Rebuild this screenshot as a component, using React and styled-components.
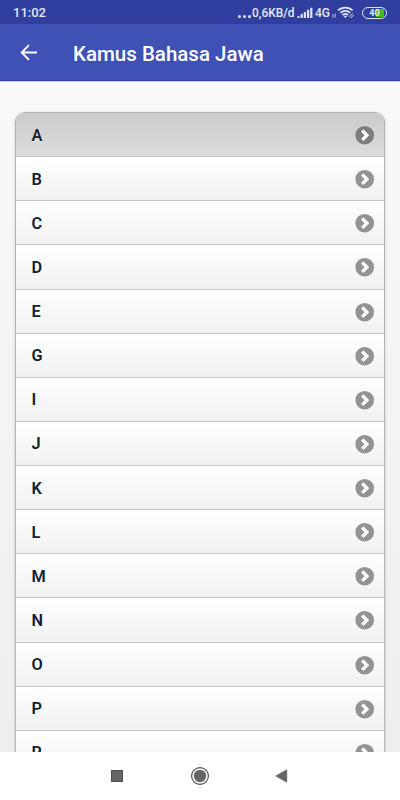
import React from 'react';
import styled, { createGlobalStyle } from 'styled-components';

const LETTERS = ['A', 'B', 'C', 'D', 'E', 'G', 'I', 'J', 'K', 'L', 'M', 'N', 'O', 'P', 'R'];

const SignalIcon = () => (
  <svg width='16' height='12' viewBox='0 0 16 12' fill='#dfe2f5'>
    <rect x='0.5' y='9' width='2' height='2' />
    <rect x='3.6' y='7' width='2.2' height='4' />
    <rect x='6.8' y='5' width='2.2' height='6' />
    <rect x='10' y='2.8' width='2.2' height='8.2' />
    <rect x='13.2' y='0.8' width='2.2' height='10.2' />
  </svg>
);

const DataIcon = () => (
  <svg width='5' height='12' viewBox='0 0 5 12' fill='#b9bfe3'>
    <rect x='0.5' y='7' width='1' height='4' />
    <rect x='2.8' y='6.5' width='1' height='4' />
  </svg>
);

const WifiIcon = () => (
  <svg width='18' height='13' viewBox='0 0 18 13' fill='none' stroke='#dfe2f5'>
    <path d='M1 4.4C5 0.6 11.6 0.6 15.6 4.4' strokeWidth='1.8' />
    <path d='M3.4 6.9C6.2 4.2 10.4 4.2 13.2 6.9' strokeWidth='1.8' />
    <path d='M5.6 9.1C7.2 7.5 9.4 7.5 11 9.1' strokeWidth='1.6' />
    <path d='M6.7 10.1L8.3 11.7L9.9 10.1Z' fill='#dfe2f5' strokeWidth='0.5' />
    <path d='M12.3 10.8L15.8 7.3M13.7 12L16.8 8.9' strokeWidth='1' />
  </svg>
);

const BackIcon = () => (
  <svg width='18' height='17' viewBox='0 0 18 17' fill='none' stroke='#fff' strokeWidth='1.9'>
    <path d='M17 8.5H2M9 1.2L1.7 8.5L9 15.8' />
  </svg>
);

const ArrowIcon = ({ active }) => (
  <svg width='20' height='20' viewBox='0 0 20 20'>
    <circle cx='9.7' cy='10.2' r='9.3' fill={active ? '#7d7d7d' : '#939393'} />
    <path d='M7.2 5.5L11.9 10.2L7.2 14.9' fill='none' stroke='#fff' strokeWidth='3.3' />
  </svg>
);

const App = () => (
  <Screen>
    <GlobalStyle />
    <StatusBar>
      <Clock>11:02</Clock>
      <StatusIcons>
        <Dots>
          <i />
          <i />
          <i />
        </Dots>
        <Speed>0,6KB/d</Speed>
        <SignalIcon />
        <Network>4G</Network>
        <DataIcon />
        <WifiIcon />
        <Battery>40</Battery>
      </StatusIcons>
    </StatusBar>
    <AppBar>
      <BackIcon />
      <Title>Kamus Bahasa Jawa</Title>
    </AppBar>
    <Content>
      <List>
        {LETTERS.map((letter, index) => (
          <Row key={letter} $active={index === 0}>
            <span>{letter}</span>
            <ArrowIcon active={index === 0} />
          </Row>
        ))}
      </List>
    </Content>
    <NavBar>
      <svg width='14' height='14' viewBox='0 0 14 14'>
        <rect x='1.5' y='1.5' width='11' height='11' fill='#666' stroke='#505050' />
      </svg>
      <svg width='20' height='20' viewBox='0 0 20 20'>
        <circle cx='10' cy='10' r='8.4' fill='none' stroke='#4a4a4a' strokeWidth='1.1' />
        <circle cx='10' cy='10' r='6.2' fill='#666' />
      </svg>
      <svg width='14' height='14' viewBox='0 0 14 14'>
        <path d='M0.7 7L11.8 0.7V13.3Z' fill='#666' stroke='#555' strokeWidth='0.5' />
      </svg>
    </NavBar>
  </Screen>
);

const GlobalStyle = createGlobalStyle`
  * {
    box-sizing: border-box;
  }
  body {
    margin: 0;
    overflow: hidden;
    font-family: Roboto, sans-serif;
  }
  svg {
    display: block;
    flex-shrink: 0;
  }
`;

const Screen = styled.div`
  display: flex;
  flex-direction: column;
  width: 400px;
  height: 800px;
  overflow: hidden;
`;

const StatusBar = styled.div`
  display: flex;
  align-items: center;
  justify-content: space-between;
  height: 24px;
  flex-shrink: 0;
  padding: 1px 13px 0;
  background: #303f9f;
  color: #e6e8f7;
`;

const Clock = styled.span`
  font-size: 13px;
  font-weight: 500;
`;

const StatusIcons = styled.div`
  display: flex;
  align-items: center;
`;

const Dots = styled.div`
  display: flex;
  gap: 2px;
  margin: 7px 1px 0 0;
  i {
    width: 3px;
    height: 3px;
    border-radius: 50%;
    background: #dfe2f5;
  }
`;

const Speed = styled.span`
  width: 45px;
  font-size: 11.9px;
  font-weight: 500;
  white-space: nowrap;
`;

const Network = styled.span`
  width: 16px;
  margin: 0 1px 0 2px;
  font-size: 12px;
  font-weight: 500;
`;

const Battery = styled.div`
  display: flex;
  align-items: center;
  justify-content: center;
  width: 25px;
  height: 12px;
  margin-left: 7px;
  border: 1px solid #dfe2f5;
  border-radius: 6px;
  background: linear-gradient(#46bd12, #46bd12) right 2px center / 8px 8px no-repeat;
  font-size: 9px;
  font-weight: 700;
  line-height: 10px;
`;

const AppBar = styled.header`
  display: flex;
  align-items: center;
  gap: 35px;
  height: 57px;
  flex-shrink: 0;
  padding: 1px 20px 0;
  background: #3f51b5;
  border-bottom: 1px solid #3041ae;
`;

const Title = styled.h1`
  margin: 0;
  padding-top: 2px;
  color: #fff;
  font-size: 20.5px;
  font-weight: 500;
  line-height: 24px;
  white-space: nowrap;
`;

const Content = styled.main`
  flex: 1;
  min-height: 0;
  overflow: hidden;
  padding: 30px 15px 0;
  background: linear-gradient(#f9f9f9, #eee);
  border-top: 1px solid #d3d5e6;
`;

const List = styled.ul`
  margin: 0;
  padding: 0;
  list-style: none;
  border: 1px solid #b5b5b5;
  border-radius: 10px 10px 0 0;
  box-shadow: 0 1px 3px rgba(0, 0, 0, 0.2);
  overflow: hidden;
`;

const Row = styled.li`
  display: flex;
  align-items: center;
  justify-content: space-between;
  height: 44.13px;
  padding: 1px 9px 0 15.5px;
  background: ${({ $active }) => ($active ? 'linear-gradient(#cbcbcb, #dcdcdc)' : 'linear-gradient(#fff, #f1f1f1)')};
  border-bottom: 1px solid #c4c4c4;
  color: #10202c;
  font-size: 16.3px;
  font-weight: 600;
  text-shadow: 0 1px 0 ${({ $active }) => ($active ? '#eee' : '#fff')};
`;

const NavBar = styled.nav`
  display: flex;
  align-items: center;
  justify-content: space-between;
  height: 48px;
  flex-shrink: 0;
  padding: 0 111px 0 110px;
  background: #fff;
`;

export default App;
